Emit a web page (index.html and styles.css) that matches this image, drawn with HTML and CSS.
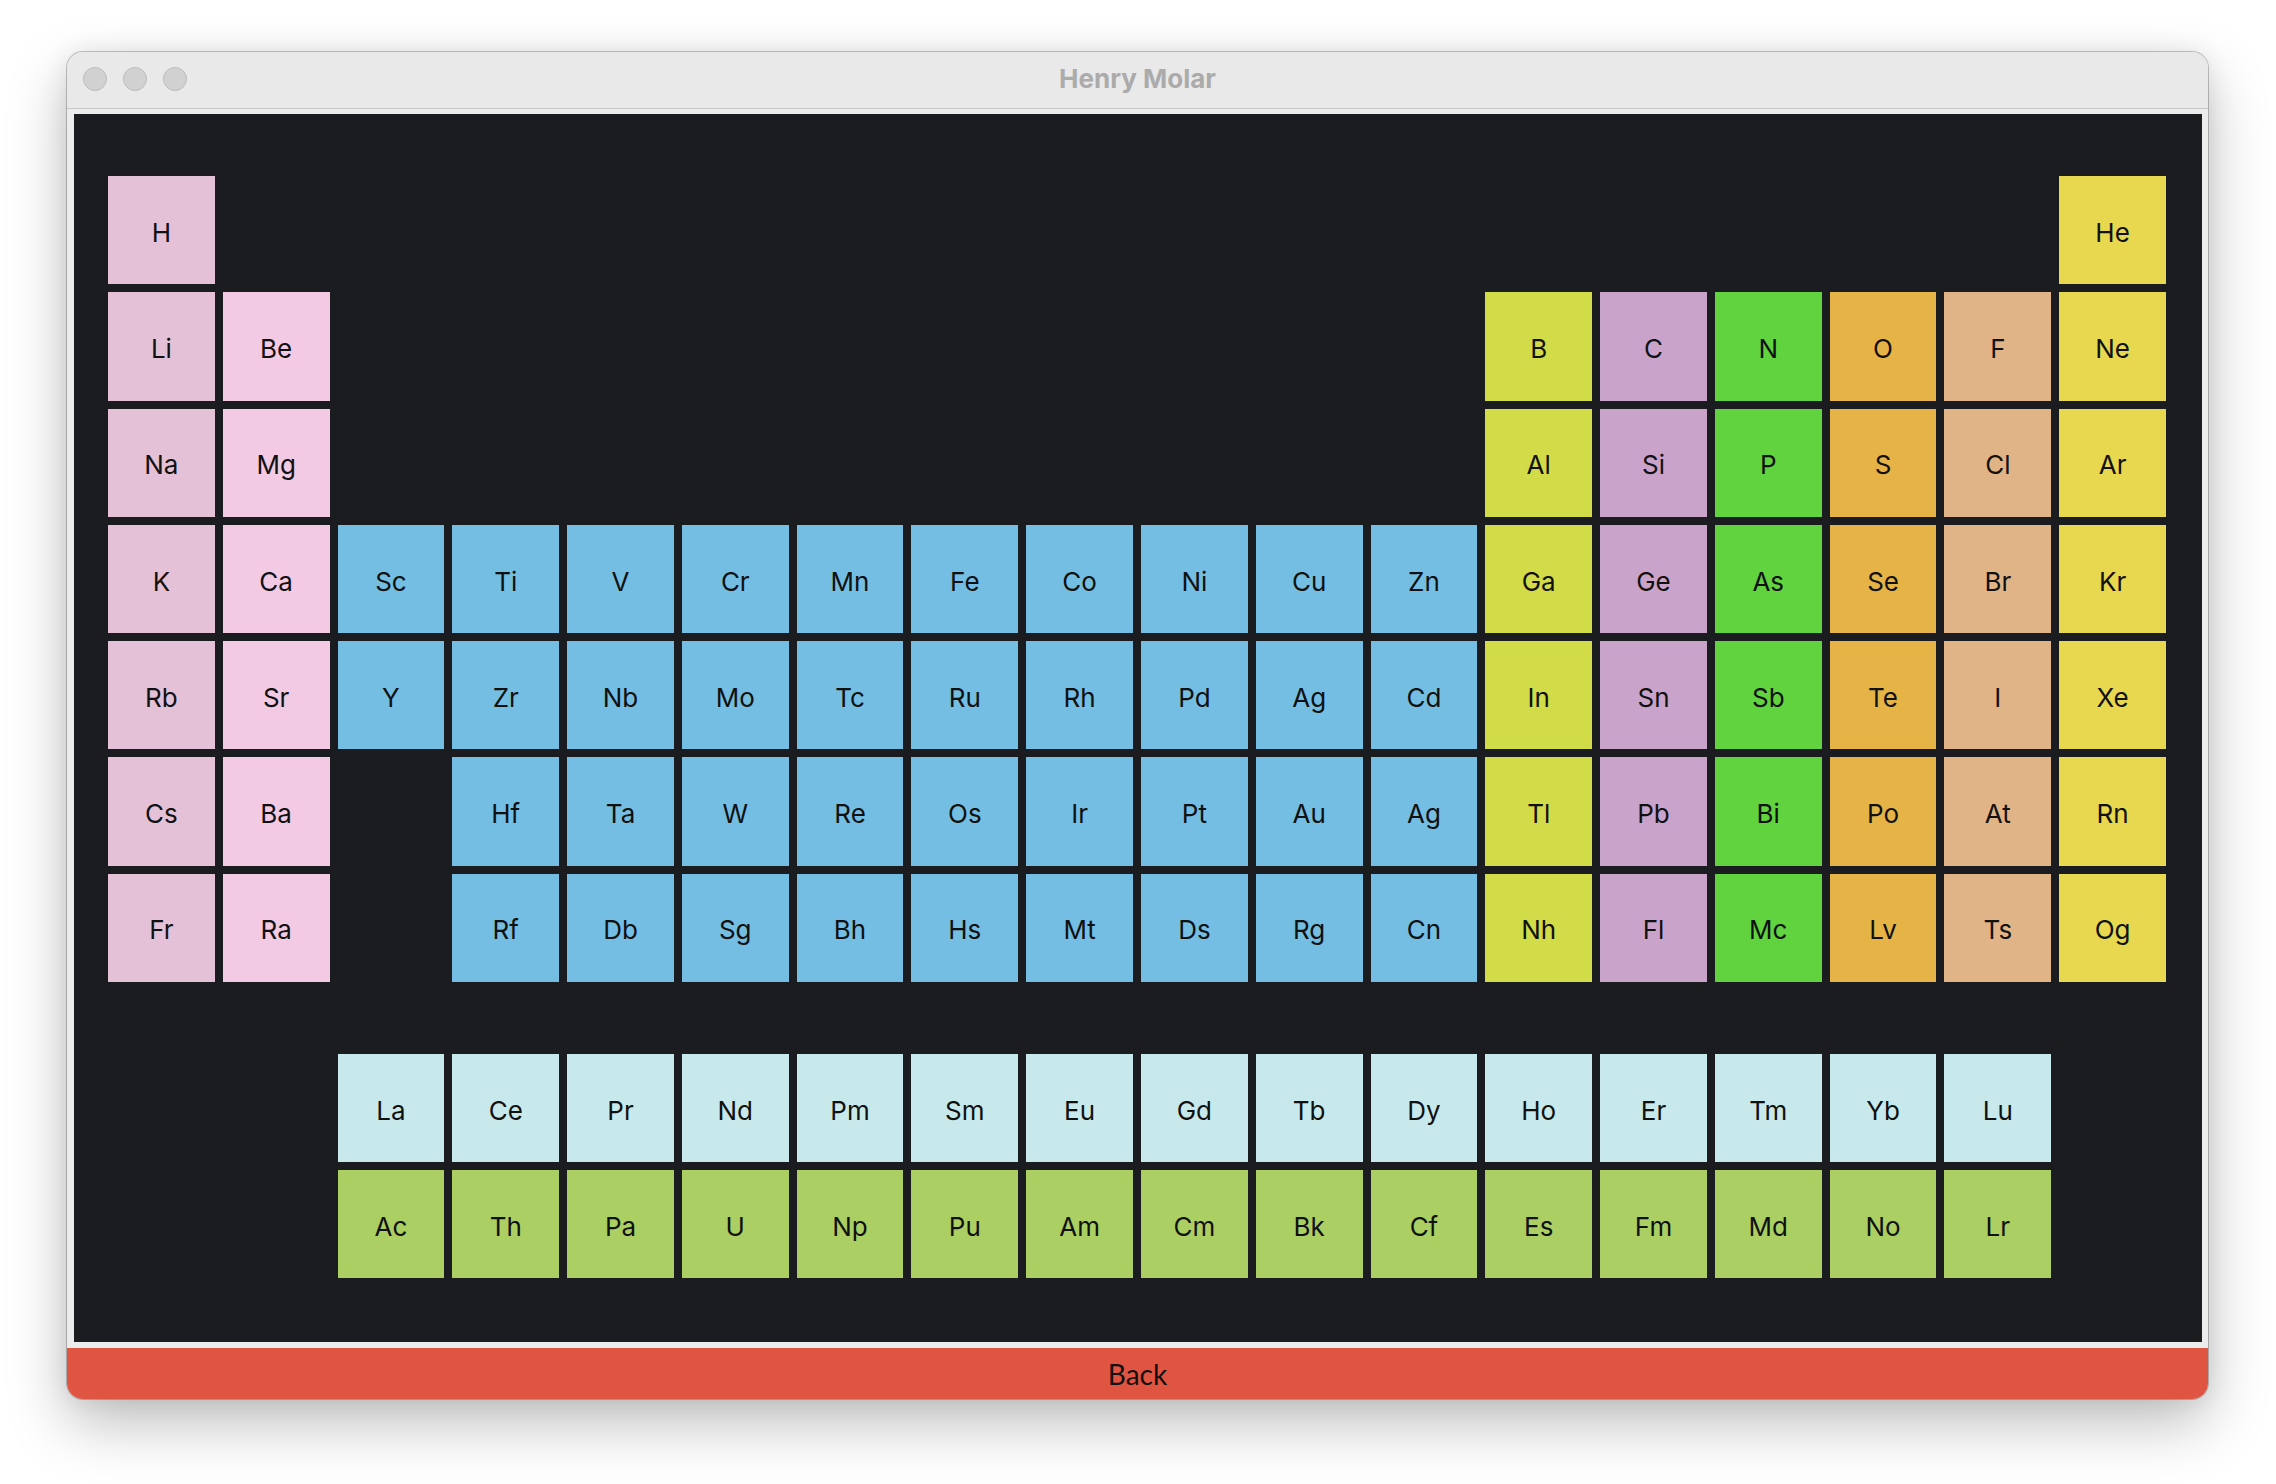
FILE: index.html
```html
<!DOCTYPE html>
<html>
<head>
<meta charset="utf-8">
<title>Henry Molar</title>
<link rel="stylesheet" href="styles.css">
</head>
<body>
<div class="stage">
  <div class="window">
    <div class="titlebar">
      <div class="lights"><span class="light"></span><span class="light"></span><span class="light"></span></div>
      <div class="title">Henry Molar</div>
    </div>
    <div class="frame">
      <div class="panel">
        <div class="table">
          <div class="cell alk">H</div>
          <div class="cell noble c18">He</div>

          <div class="cell alk">Li</div>
          <div class="cell ae">Be</div>
          <div class="cell bor c13">B</div>
          <div class="cell car">C</div>
          <div class="cell nit">N</div>
          <div class="cell oxy">O</div>
          <div class="cell hal">F</div>
          <div class="cell noble">Ne</div>

          <div class="cell alk">Na</div>
          <div class="cell ae">Mg</div>
          <div class="cell bor c13">Al</div>
          <div class="cell car">Si</div>
          <div class="cell nit">P</div>
          <div class="cell oxy">S</div>
          <div class="cell hal">Cl</div>
          <div class="cell noble">Ar</div>

          <div class="cell alk">K</div>
          <div class="cell ae">Ca</div>
          <div class="cell tr">Sc</div>
          <div class="cell tr">Ti</div>
          <div class="cell tr">V</div>
          <div class="cell tr">Cr</div>
          <div class="cell tr">Mn</div>
          <div class="cell tr">Fe</div>
          <div class="cell tr">Co</div>
          <div class="cell tr">Ni</div>
          <div class="cell tr">Cu</div>
          <div class="cell tr">Zn</div>
          <div class="cell bor">Ga</div>
          <div class="cell car">Ge</div>
          <div class="cell nit">As</div>
          <div class="cell oxy">Se</div>
          <div class="cell hal">Br</div>
          <div class="cell noble">Kr</div>

          <div class="cell alk">Rb</div>
          <div class="cell ae">Sr</div>
          <div class="cell tr">Y</div>
          <div class="cell tr">Zr</div>
          <div class="cell tr">Nb</div>
          <div class="cell tr">Mo</div>
          <div class="cell tr">Tc</div>
          <div class="cell tr">Ru</div>
          <div class="cell tr">Rh</div>
          <div class="cell tr">Pd</div>
          <div class="cell tr">Ag</div>
          <div class="cell tr">Cd</div>
          <div class="cell bor">In</div>
          <div class="cell car">Sn</div>
          <div class="cell nit">Sb</div>
          <div class="cell oxy">Te</div>
          <div class="cell hal">I</div>
          <div class="cell noble">Xe</div>

          <div class="cell alk">Cs</div>
          <div class="cell ae">Ba</div>
          <div class="cell tr c4">Hf</div>
          <div class="cell tr">Ta</div>
          <div class="cell tr">W</div>
          <div class="cell tr">Re</div>
          <div class="cell tr">Os</div>
          <div class="cell tr">Ir</div>
          <div class="cell tr">Pt</div>
          <div class="cell tr">Au</div>
          <div class="cell tr">Ag</div>
          <div class="cell bor">Tl</div>
          <div class="cell car">Pb</div>
          <div class="cell nit">Bi</div>
          <div class="cell oxy">Po</div>
          <div class="cell hal">At</div>
          <div class="cell noble">Rn</div>

          <div class="cell alk">Fr</div>
          <div class="cell ae">Ra</div>
          <div class="cell tr c4">Rf</div>
          <div class="cell tr">Db</div>
          <div class="cell tr">Sg</div>
          <div class="cell tr">Bh</div>
          <div class="cell tr">Hs</div>
          <div class="cell tr">Mt</div>
          <div class="cell tr">Ds</div>
          <div class="cell tr">Rg</div>
          <div class="cell tr">Cn</div>
          <div class="cell bor">Nh</div>
          <div class="cell car">Fl</div>
          <div class="cell nit">Mc</div>
          <div class="cell oxy">Lv</div>
          <div class="cell hal">Ts</div>
          <div class="cell noble">Og</div>
        </div>

        <div class="fblock">
          <div class="cell lan c3">La</div>
          <div class="cell lan">Ce</div>
          <div class="cell lan">Pr</div>
          <div class="cell lan">Nd</div>
          <div class="cell lan">Pm</div>
          <div class="cell lan">Sm</div>
          <div class="cell lan">Eu</div>
          <div class="cell lan">Gd</div>
          <div class="cell lan">Tb</div>
          <div class="cell lan">Dy</div>
          <div class="cell lan">Ho</div>
          <div class="cell lan">Er</div>
          <div class="cell lan">Tm</div>
          <div class="cell lan">Yb</div>
          <div class="cell lan">Lu</div>

          <div class="cell act c3">Ac</div>
          <div class="cell act">Th</div>
          <div class="cell act">Pa</div>
          <div class="cell act">U</div>
          <div class="cell act">Np</div>
          <div class="cell act">Pu</div>
          <div class="cell act">Am</div>
          <div class="cell act">Cm</div>
          <div class="cell act">Bk</div>
          <div class="cell act">Cf</div>
          <div class="cell act">Es</div>
          <div class="cell act">Fm</div>
          <div class="cell act">Md</div>
          <div class="cell act">No</div>
          <div class="cell act">Lr</div>
        </div>
      </div>
    </div>
    <div class="back">Back</div>
  </div>
</div>
</body>
</html>
```

FILE: styles.css
```css
html, body {
  margin: 0;
  padding: 0;
  background: #ffffff;
}

.stage {
  padding: 52px 0 0 67px;
  width: 2276px;
  height: 1484px;
  box-sizing: border-box;
  overflow: hidden;
}

.window {
  width: 2141px;
  height: 1347px;
  border-radius: 16px;
  overflow: hidden;
  background: #ececec;
  box-shadow: 0 0 0 1px rgba(0, 0, 0, 0.22), 0 24px 60px rgba(0, 0, 0, 0.26), 0 0 24px rgba(0, 0, 0, 0.08);
  display: flex;
  flex-direction: column;
}

.titlebar {
  height: 56px;
  flex: 0 0 56px;
  background: #e9e9e9;
  border-bottom: 1px solid #c9c9c9;
  position: relative;
  display: flex;
  align-items: center;
  justify-content: center;
}

.lights {
  position: absolute;
  left: 16px;
  top: 15px;
  display: flex;
  gap: 16px;
}

.light {
  width: 22px;
  height: 22px;
  border-radius: 50%;
  background: #d1d1d1;
  border: 1px solid #bbbbbb;
}

.title {
  font-family: Inter, "Liberation Sans", sans-serif;
  font-weight: 700;
  font-size: 26px;
  color: #ababab;
  padding-bottom: 3px;
}

.frame {
  padding: 5px 6px 6px 7px;
  background: #ececec;
}

.panel {
  background: #1a1c20;
  height: 1228px;
  box-sizing: border-box;
  padding: 62px 36px 64px 34px;
}

.table {
  display: grid;
  grid-template-columns: repeat(18, 1fr);
  grid-template-rows: repeat(7, 108.3px);
  gap: 8px;
}

.fblock {
  display: grid;
  grid-template-columns: repeat(18, 1fr);
  grid-template-rows: repeat(2, 108px);
  gap: 8px;
  margin-top: 72px;
}

.cell {
  display: flex;
  align-items: center;
  justify-content: center;
  padding-top: 4px;
  box-sizing: border-box;
  font-family: Inter, "Liberation Sans", sans-serif;
  font-size: 26px;
  color: #111111;
}

.c3 { grid-column-start: 3; }
.c4 { grid-column-start: 4; }
.c13 { grid-column-start: 13; }
.c18 { grid-column-start: 18; }

.alk { background: #e4c1d7; }
.ae { background: #f2cae3; }
.tr { background: #73bee2; }
.bor { background: #d2dc48; }
.car { background: #c9a3c9; }
.nit { background: #60d33f; }
.oxy { background: #e6b446; }
.hal { background: #e1b487; }
.noble { background: #e8d84f; }
.lan { background: #c7e9ec; }
.act { background: #abcf63; }

.back {
  flex: 1;
  background: #e05442;
  display: flex;
  align-items: center;
  justify-content: center;
  font-family: Lato, "Liberation Sans", sans-serif;
  font-size: 28px;
  color: #111111;
}
```
